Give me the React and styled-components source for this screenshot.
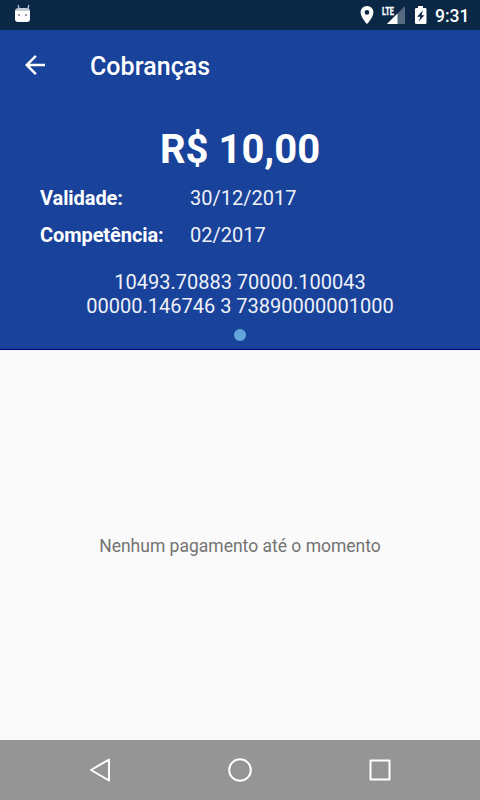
import React from 'react'
import styled, { createGlobalStyle } from 'styled-components'

const GlobalStyle = createGlobalStyle`
    * {
        box-sizing: border-box;
    }
    body {
        margin: 0;
        font-family: Roboto, sans-serif;
    }
`

const Screen = styled.div`
    display: flex;
    flex-direction: column;
    width: 480px;
    height: 800px;
    overflow: hidden;
    background: #fafafa;
`

const StatusBar = styled.div`
    display: flex;
    align-items: center;
    justify-content: space-between;
    height: 30px;
    padding: 0 10px 0 12px;
    background: #0a2846;
    color: #fff;
`

const StatusIcons = styled.div`
    display: flex;
    align-items: center;
    gap: 7px;
    height: 30px;
`

const Clock = styled.span`
    width: 35px;
    font-size: 17.5px;
    font-weight: 500;
    line-height: 30px;
    padding-top: 1px;
    white-space: nowrap;
`

const Header = styled.header`
    height: 320px;
    background: #19429b;
    border-bottom: 1px solid #00007d;
    color: #fff;
`

const Toolbar = styled.div`
    display: flex;
    align-items: center;
    height: 70px;
    padding-left: 20px;
`

const BackButton = styled.button`
    display: flex;
    width: 30px;
    height: 30px;
    margin-right: 40px;
    padding: 0;
    border: 0;
    background: none;
    color: inherit;
`

const Title = styled.h1`
    margin: 0;
    padding-top: 4px;
    font-size: 25px;
    font-weight: 500;
    line-height: 30px;
    letter-spacing: 0.05px;
`

const Amount = styled.div`
    margin-top: 26px;
    font-size: 40px;
    font-weight: 700;
    line-height: 48px;
    text-align: center;
`

const Details = styled.dl`
    display: grid;
    grid-template-columns: 150px 1fr;
    row-gap: 13px;
    margin: 12px 40px 0;
    font-size: 20px;
    line-height: 24px;
`

const Label = styled.dt`
    font-weight: 700;
    letter-spacing: -0.08px;
`

const Value = styled.dd`
    margin: 0;
    color: #eef1f8;
`

const Barcode = styled.div`
    margin-top: 23px;
    color: #eef1f8;
    font-size: 20px;
    line-height: 24px;
    text-align: center;
`

const Pager = styled.div`
    display: flex;
    justify-content: center;
    margin-top: 11px;
`

const Dot = styled.span`
    width: 12px;
    height: 12px;
    border-radius: 50%;
    background: #62a6dc;
`

const Empty = styled.main`
    flex: 1;
    display: flex;
    align-items: center;
    justify-content: center;
    padding-top: 2px;
    color: #737373;
    font-size: 17.5px;
    line-height: 22px;
`

const NavBar = styled.nav`
    display: flex;
    justify-content: center;
    gap: 100px;
    height: 60px;
    padding-top: 10px;
    background: #959595;
`

const NavButton = styled.button`
    width: 40px;
    height: 40px;
    padding: 0;
    border: 0;
    background: none;
`

const NavIcon = ({ children }) => (
    <NavButton>
        <svg width="40" height="40" fill="none" stroke="#fff" strokeWidth="2" strokeLinejoin="round">{children}</svg>
    </NavButton>
)

const DebugIcon = () => (
    <svg width="20" height="30">
        <path d="M6.2 5l1 5M16.8 5l-1 5" stroke="#b4bfcd" strokeWidth="1.3" />
        <path d="M3 12v-1q0-3 4-3h7q4 0 4 3v1z" fill="#c4ccd6" />
        <path d="M3 11h15v8q0 3-3 3H6q-3 0-3-3z" fill="#fff" />
        <circle cx="7" cy="15" r="1.1" fill="#7b8593" />
        <circle cx="14" cy="15" r="1.1" fill="#7b8593" />
    </svg>
)

const LocationIcon = () => (
    <svg width="14" height="30">
        <path fill="#fff" fillRule="evenodd" d="M7 6a6.4 6.4 0 0 0-6.4 6.4C.6 17 7 24 7 24s6.4-7 6.4-11.6A6.4 6.4 0 0 0 7 6zm0 4.1a2.3 2.3 0 1 1 0 4.6 2.3 2.3 0 0 1 0-4.6z" />
    </svg>
)

const SignalIcon = () => (
    <svg width="26" height="30">
        <path d="M24 6v18H6z" fill="#546a80" />
        <path d="M0 4h14v11.5H0z" fill="#0a2846" />
        <path d="M16.5 13.5V24H6z" fill="#fff" />
        <text x="1" y="14.5" fill="#fff" stroke="#fff" strokeWidth="0.3" fontSize="11.5" fontWeight="700" textLength="12" lengthAdjust="spacingAndGlyphs">LTE</text>
    </svg>
)

const BatteryIcon = () => (
    <svg width="14" height="30">
        <path fill="#fff" fillRule="evenodd" d="M4 6h5v2h2.3q1.2 0 1.2 1.2v13.6q0 1.2-1.2 1.2H2.2Q1 24 1 22.8V9.2Q1 8 2.2 8H4zM8.8 10.5L3.2 16.7h3.2l-1.6 4.8 5.6-6.3H7.6z" />
    </svg>
)

export default function App() {
    return (
        <>
            <GlobalStyle />
            <Screen>
                <StatusBar>
                    <DebugIcon />
                    <StatusIcons>
                        <LocationIcon />
                        <SignalIcon />
                        <BatteryIcon />
                        <Clock>9:31</Clock>
                    </StatusIcons>
                </StatusBar>
                <Header>
                    <Toolbar>
                        <BackButton aria-label="Voltar">
                            <svg width="30" height="30" viewBox="0 0 24 24" fill="currentColor">
                                <path d="M20 11H7.83l5.59-5.59L12 4l-8 8 8 8 1.41-1.41L7.83 13H20v-2z" />
                            </svg>
                        </BackButton>
                        <Title>Cobranças</Title>
                    </Toolbar>
                    <Amount>R$ 10,00</Amount>
                    <Details>
                        <Label>Validade:</Label>
                        <Value>30/12/2017</Value>
                        <Label>Competência:</Label>
                        <Value>02/2017</Value>
                    </Details>
                    <Barcode>
                        10493.70883 70000.100043<br />
                        00000.146746 3 73890000001000
                    </Barcode>
                    <Pager><Dot /></Pager>
                </Header>
                <Empty>Nenhum pagamento até o momento</Empty>
                <NavBar>
                    <NavIcon><path d="M11 20L29 9.5v21z" /></NavIcon>
                    <NavIcon><circle cx="20" cy="20" r="10.8" /></NavIcon>
                    <NavIcon><rect x="10.5" y="10.5" width="19" height="19" /></NavIcon>
                </NavBar>
            </Screen>
        </>
    )
}
